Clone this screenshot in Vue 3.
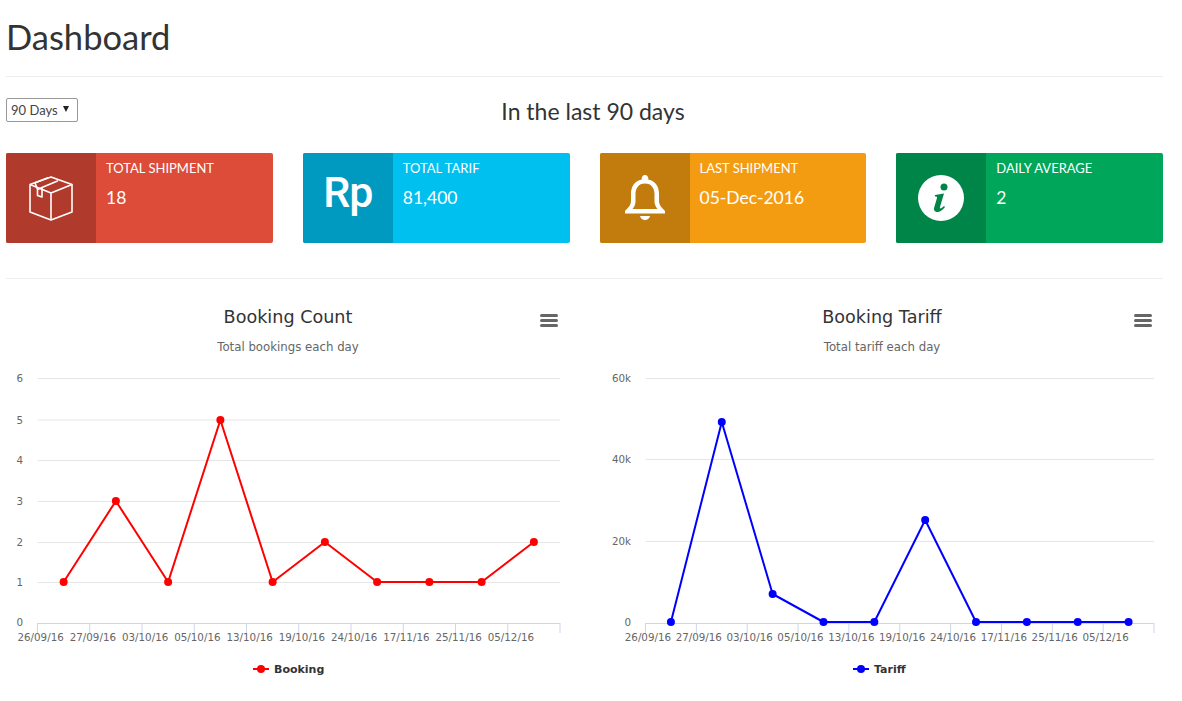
<script setup>
const cards = [
  { label: 'TOTAL SHIPMENT', value: '18', bg: '#dd4b39', dark: '#b03b2d', icon: 'box' },
  { label: 'TOTAL TARIF', value: '81,400', bg: '#00c0ef', dark: '#0099bf', icon: 'rp' },
  { label: 'LAST SHIPMENT', value: '05-Dec-2016', bg: '#f39c12', dark: '#c27c0e', icon: 'bell' },
  { label: 'DAILY AVERAGE', value: '2', bg: '#00a65a', dark: '#008548', icon: 'info' }
]

const dates = ['26/09/16', '27/09/16', '03/10/16', '05/10/16', '13/10/16', '19/10/16', '24/10/16', '17/11/16', '25/11/16', '05/12/16']

// plot areas measured in page pixels, chart svg starts at its own left edge
const charts = [
  {
    title: 'Booking Count', subtitle: 'Total bookings each day', series: 'Booking', color: '#ff0000',
    left: 37.5, right: 560, labelX: 23, menuX: 540, titleX: 288, legendX: 253,
    ticks: [['6', 378], ['5', 419.5], ['4', 460], ['3', 501], ['2', 542], ['1', 582], ['0', 622]],
    values: [582, 501, 582, 420, 582, 542, 582, 582, 582, 542]
  },
  {
    title: 'Booking Tariff', subtitle: 'Total tariff each day', series: 'Tariff', color: '#0000ff',
    left: 645.5, right: 1154, labelX: 631, menuX: 1134, titleX: 882, legendX: 853,
    ticks: [['60k', 378], ['40k', 459], ['20k', 541], ['0', 622]],
    values: [622, 422, 594, 622, 622, 520, 622, 622, 622, 622]
  }
]

function pointX(chart, i) {
  const step = (chart.right - chart.left) / 10
  return chart.left + step * (i + 0.5)
}

function linePoints(chart) {
  return chart.values.map((y, i) => pointX(chart, i) + ',' + y).join(' ')
}

function tickX(chart, i) {
  return chart.left + (chart.right - chart.left) / 10 * i
}
</script>

<template>
  <div class="page">
    <h1 class="title">Dashboard</h1>
    <hr class="rule" />

    <div class="range">
      <div class="range-select">
        <span>90 Days</span>
        <i class="caret"></i>
      </div>
      <h2 class="range-title">In the last 90 days</h2>
    </div>

    <div class="cards">
      <div v-for="card in cards" :key="card.label" class="card" :style="{ background: card.bg }">
        <div class="card-icon" :style="{ background: card.dark }">
          <svg v-if="card.icon === 'box'" width="44" height="45" viewBox="0 0 44 45" fill="none" stroke="#fff" stroke-width="1.6" stroke-linejoin="round">
            <path d="M22 1 L43 8.500 V36 L22 44 L1 36 V8.500 Z" />
            <path d="M1 8.500 L22 17 L43 8.500 M22 17 V44" />
            <path d="M6 6.800 L8.500 13.500 V19.500 L13 21 V11.500 L29 4.800 M8.500 13.500 L13 11.500 M6 6.800 L19 1.800" />
          </svg>
          <span v-else-if="card.icon === 'rp'" class="rp">Rp</span>
          <svg v-else-if="card.icon === 'bell'" width="40" height="46" viewBox="0 0 40 46">
            <path fill="#fff" d="M20 0 a3.400 3.400 0 0 1 3.200 4.400 C31 6 34 12 34 19 V26 C34 30 37 33 40 36 V38.500 H0 V36 C3 33 6 30 6 26 V19 C6 12 9 6 16.800 4.400 A3.400 3.400 0 0 1 20 0 Z M20 8.500 C13.500 8.500 10.500 13.500 10.500 19 V26.500 C10.500 29 9.500 31.500 7.500 34 H32.500 C30.500 31.500 29.500 29 29.500 26.500 V19 C29.500 13.500 26.500 8.500 20 8.500 Z" />
            <path fill="#fff" d="M15 41 H25 C24 46.500 16 46.500 15 41 Z" />
          </svg>
          <svg v-else width="46" height="46" viewBox="0 0 46 46">
            <circle cx="23" cy="23" r="23" fill="#fff" />
            <circle cx="26" cy="12" r="3.500" fill="#008548" />
            <path fill="#008548" d="M17 20 L26 18.500 L22 32 C21.500 34 23 34 26 31 L27 32 C24 36 21 37.500 18.500 37 C16 36.500 15.500 34.500 16.300 32 L19 23 C19.300 21.800 18.500 21.500 16.800 21.500 Z" />
          </svg>
        </div>
        <div class="card-body">
          <div class="card-label">{{ card.label }}</div>
          <div class="card-value">{{ card.value }}</div>
        </div>
      </div>
    </div>

    <hr class="rule rule-cards" />

    <svg class="charts" width="1182" height="399" viewBox="0 302 1182 399">
      <g v-for="chart in charts" :key="chart.title">
        <text class="chart-title" :x="chart.titleX" y="323" text-anchor="middle">{{ chart.title }}</text>
        <text class="chart-sub" :x="chart.titleX" y="351" text-anchor="middle">{{ chart.subtitle }}</text>
        <g fill="#666">
          <rect :x="chart.menuX" y="314" width="18" height="3" rx="1.500" />
          <rect :x="chart.menuX" y="319" width="18" height="3" rx="1.500" />
          <rect :x="chart.menuX" y="324" width="18" height="3" rx="1.500" />
        </g>

        <g v-for="t in chart.ticks" :key="t[0]">
          <line v-if="t[0] !== '0'" :x1="chart.left" :x2="chart.right" :y1="t[1] + 0.5" :y2="t[1] + 0.5" stroke="#e6e6e6" />
          <text class="axis" :x="chart.labelX" :y="t[1] + 4" text-anchor="end">{{ t[0] }}</text>
        </g>

        <line :x1="chart.left" :x2="chart.right" y1="623.500" y2="623.500" stroke="#ccd6eb" />
        <line v-for="n in 11" :key="n" :x1="tickX(chart, n - 1)" :x2="tickX(chart, n - 1)" y1="623" y2="633" stroke="#ccd6eb" />
        <text v-for="(d, i) in dates" :key="d" class="axis" :x="pointX(chart, i) - 23" y="641" text-anchor="middle">{{ d }}</text>

        <polyline :points="linePoints(chart)" fill="none" :stroke="chart.color" stroke-width="2" stroke-linejoin="round" />
        <circle v-for="(y, i) in chart.values" :key="i" :cx="pointX(chart, i)" :cy="y" r="4" :fill="chart.color" />

        <line :x1="chart.legendX" :x2="chart.legendX + 16" y1="669" y2="669" :stroke="chart.color" stroke-width="2" />
        <circle :cx="chart.legendX + 8" cy="669" r="4" :fill="chart.color" />
        <text class="legend" :x="chart.legendX + 21" y="673">{{ chart.series }}</text>
      </g>
    </svg>
  </div>
</template>

<style scoped>
.page {
  width: 1182px;
  height: 701px;
  overflow: hidden;
  color: #333;
  font-family: Lato, "Open Sans", sans-serif;
}
.title {
  margin: 0;
  padding: 17px 0 0 6px;
  height: 59px;
  box-sizing: content-box;
  font-size: 34.500px;
  line-height: 40px;
  font-weight: 400;
}
.rule {
  margin: 0 19px 0 6px;
  border: 0;
  border-top: 1px solid #eee;
}
.range {
  display: flex;
  align-items: flex-start;
  padding: 21px 19px 0 6px;
  height: 55px;
  box-sizing: content-box;
}
.range-select {
  display: flex;
  align-items: center;
  gap: 5px;
  width: 72px;
  height: 24px;
  box-sizing: border-box;
  padding-left: 4px;
  border: 1px solid #999;
  border-radius: 2px;
  font-size: 13px;
  color: #444;
}
.caret {
  width: 0;
  height: 0;
  margin-top: -3px;
  border-left: 3.5px solid transparent;
  border-right: 3.5px solid transparent;
  border-top: 6px solid #222;
}
.range-title {
  flex: 1;
  margin: 0;
  padding-right: 55px;
  text-align: center;
  font-size: 23px;
  line-height: 26px;
  font-weight: 400;
}
.cards {
  display: flex;
  gap: 30px;
  padding: 0 19px 0 6px;
}
.card {
  display: flex;
  flex: 1;
  height: 90px;
  border-radius: 2px;
  overflow: hidden;
  color: #fff;
}
.card-icon {
  display: flex;
  align-items: center;
  justify-content: center;
  width: 90px;
  flex: none;
}
.card-body {
  padding: 6px 10px;
}
.card-label {
  font-size: 13px;
  line-height: 18px;
}
.card-value {
  margin-top: 9px;
  font-size: 17.500px;
  line-height: 24px;
}
.rp {
  font-family: Roboto, sans-serif;
  font-size: 43px;
  font-weight: 500;
  line-height: 1;
  letter-spacing: -1px;
  margin-top: -12px;
}
.rule-cards {
  margin-top: 35px;
}
.charts {
  display: block;
  margin-top: 23px;
}
.chart-title {
  font-family: "DejaVu Sans", sans-serif;
  font-size: 17.600px;
  fill: #333;
}
.chart-sub {
  font-family: "DejaVu Sans", sans-serif;
  font-size: 11.750px;
  fill: #666;
}
.axis {
  font-family: "DejaVu Sans", sans-serif;
  font-size: 10.300px;
  fill: #666;
}
.legend {
  font-family: "DejaVu Sans", sans-serif;
  font-size: 11px;
  font-weight: 700;
  fill: #333;
}
</style>
